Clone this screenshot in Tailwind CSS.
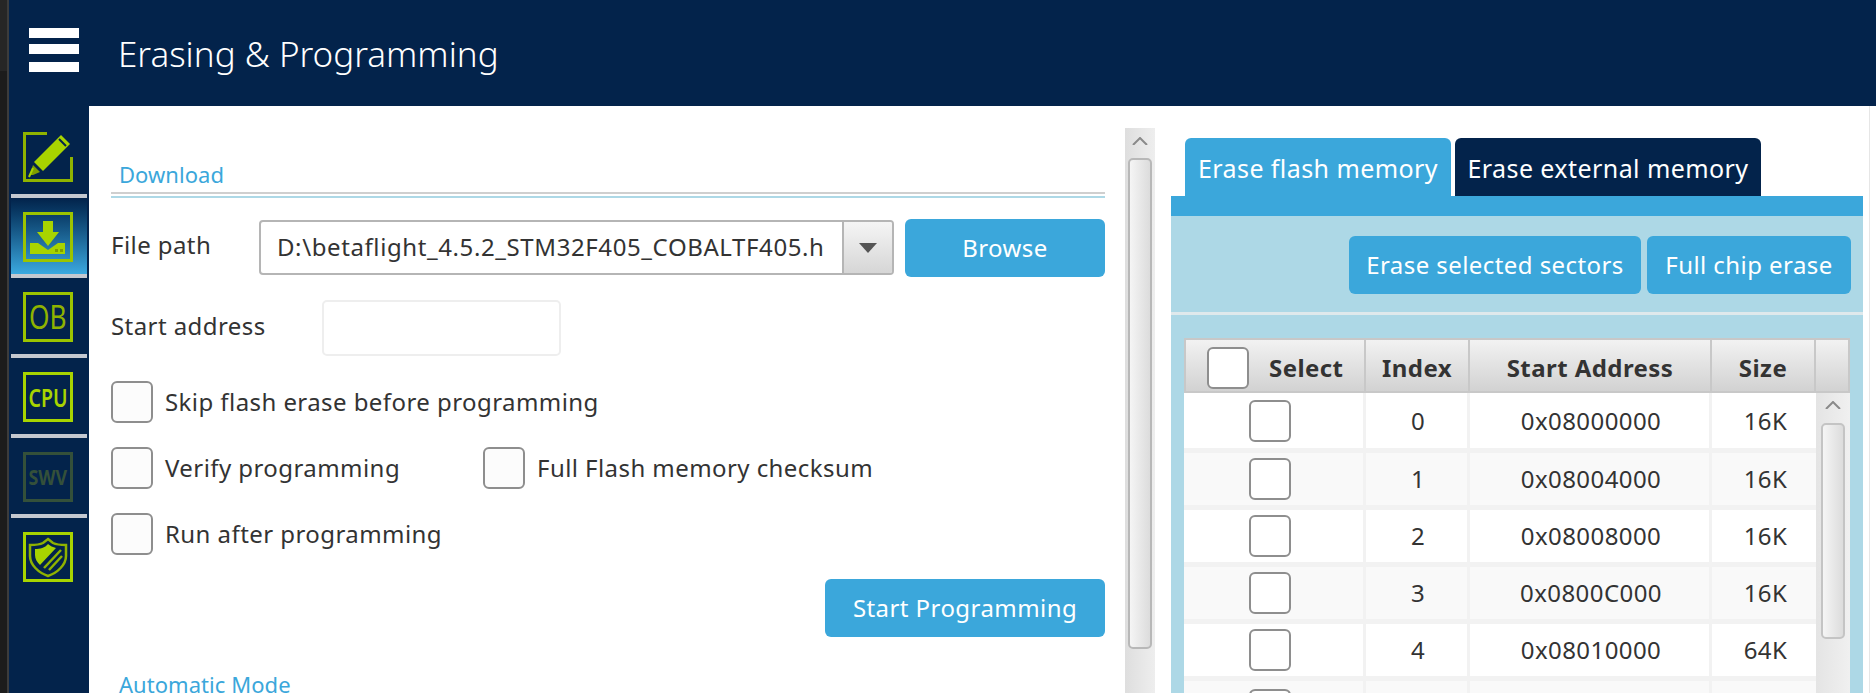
<!DOCTYPE html>
<html lang="en">
<head>
  <meta charset="UTF-8">
  <title>Erasing &amp; Programming</title>
  <script src="https://cdn.jsdelivr.net/npm/@tailwindcss/browser@4"></script>
</head>
<body class="h-[693px] w-[1876px] overflow-hidden flex bg-[#1c1c1c] font-['Noto_Sans',sans-serif] text-[#333]">
  <!-- window edge -->
  <div class="w-[7px] shrink-0 bg-[#1c1c1c]"><div class="h-[71px] bg-[#262626]"></div></div>
  <div class="w-[2px] shrink-0 bg-[#3c3c3c]"></div>

  <div class="flex-1 flex flex-col min-w-0">
    <!-- top bar -->
    <header class="h-[106px] shrink-0 bg-[#03234b] flex items-start">
      <div class="w-[50px] ml-[20px] mt-[28px] flex flex-col">
        <div class="h-[10px] bg-white"></div>
        <div class="h-[10px] bg-white mt-[6px]"></div>
        <div class="h-[10px] bg-white mt-[8px]"></div>
      </div>
      <h1 class="ml-[39px] mt-[31px] text-[35px] leading-[46px] font-light text-white">Erasing &amp; Programming</h1>
    </header>

    <div class="flex-1 flex min-h-0">
      <!-- side menu -->
      <nav class="w-[80px] shrink-0 bg-[#03234b] pt-[12px] flex flex-col items-center">
        <div class="w-[76px] h-[76px] pl-[12px] pr-[14px] pt-[14px]">
          <svg width="50" height="50" viewBox="0 0 50 50" fill="none">
            <path d="M24 1.500H1.500V48.500H48.500V25" stroke="#8fb300" stroke-width="3"/>
            <path d="M38 3L47 12L20 39L11 30Z" fill="#a8d400"/>
            <path d="M36 7L43 14" stroke="#03234b" stroke-width="2"/>
            <path d="M10 33L17 40L10 43L7 43Z" fill="#7f9f00"/>
            <path d="M6 45L10 36" stroke="#a8d400" stroke-width="2"/>
          </svg>
        </div>
        <div class="w-[76px] h-[4px] bg-[#c4c8d0]"></div>

        <div class="w-[76px] h-[76px] pl-[12px] pr-[14px] pt-[14px] bg-gradient-to-b from-[#03234b] to-[#3ba9e0]">
          <svg width="50" height="50" viewBox="0 0 50 50" fill="none">
            <rect x="1.500" y="1.500" width="47" height="47" stroke="#9cc400" stroke-width="3"/>
            <path d="M20 9H30V20H36L25 34L14 20H20Z" fill="#a8d400"/>
            <path d="M7 31H15L25 38L35 31H42V42H7Z" fill="#a8d400"/>
            <rect x="32" y="37" width="3" height="3" fill="#7f9f00"/>
            <rect x="37" y="37" width="3" height="3" fill="#7f9f00"/>
          </svg>
        </div>
        <div class="w-[76px] h-[4px] bg-[#c4c8d0]"></div>

        <div class="w-[76px] h-[76px] pl-[12px] pr-[14px] pt-[14px]">
          <div class="w-[50px] h-[50px] border-[3px] border-[#9cc400] flex items-center justify-center text-[32px] leading-none text-[#8fb300]"><span class="scale-x-[0.82]">OB</span></div>
        </div>
        <div class="w-[76px] h-[4px] bg-[#c4c8d0]"></div>

        <div class="w-[76px] h-[76px] pl-[12px] pr-[14px] pt-[14px]">
          <div class="w-[50px] h-[50px] border-[3px] border-[#a8d400] flex items-center justify-center text-[25px] leading-none font-semibold text-[#a8d400]"><span class="scale-x-[0.78]">CPU</span></div>
        </div>
        <div class="w-[76px] h-[4px] bg-[#c4c8d0]"></div>

        <div class="w-[76px] h-[76px] pl-[12px] pr-[14px] pt-[14px]">
          <div class="w-[50px] h-[50px] border-[3px] border-[#34503a] flex items-center justify-center text-[21px] leading-none font-bold text-[#34503a]"><span class="scale-x-[0.85]">SWV</span></div>
        </div>
        <div class="w-[76px] h-[4px] bg-[#c4c8d0]"></div>

        <div class="w-[76px] h-[76px] pl-[12px] pr-[14px] pt-[14px]">
          <svg width="50" height="50" viewBox="0 0 50 50" fill="none">
            <rect x="1.500" y="1.500" width="47" height="47" stroke="#a8d400" stroke-width="3"/>
            <path d="M25 7L30 11C34 13 38 13 43 13V24C43 33 34 41 25 44C16 41 7 33 7 24V13C12 13 16 13 20 11Z" stroke="#8fb300" stroke-width="2.500"/>
            <path d="M25 12C27 14 30 15 33 16L17 33C14 30 12 27 12 23V17C17 17 22 16 25 12Z" fill="#a8d400"/>
            <path d="M38 18L21 36M39 24L26 38" stroke="#8fb300" stroke-width="2.500"/>
          </svg>
        </div>
      </nav>

      <!-- content -->
      <main class="flex-1 flex min-w-0 bg-white text-[24px] tracking-[0.43px]">
        <!-- download pane -->
        <section class="w-[1036px] shrink-0 pl-[22px] pr-[20px] pt-[53px] overflow-hidden">
          <h2 class="h-[33px] pl-[8px] text-[22px] leading-[30px] text-[#3ba7db] tracking-[0.05px]">Download</h2>
          <div class="h-[6px] border-t-2 border-b-2 border-t-[#cfcfcf] border-b-[#add8e6]"></div>

          <div class="mt-[20px] flex items-start">
            <label class="w-[148px] leading-[52px] mt-[1px]">File path</label>
            <div class="w-[635px] h-[55px] mt-[2px] flex border-2 border-[#b5b5b5] rounded-[4px] bg-white overflow-hidden">
              <div class="flex-1 min-w-0 ml-[16px] mr-[17px] overflow-hidden whitespace-nowrap leading-[50px] tracking-[0.6px]">D:\betaflight_4.5.2_STM32F405_COBALTF405.hex</div>
              <div class="w-[50px] shrink-0 border-l-2 border-[#b5b5b5] bg-gradient-to-b from-[#f5f5f5] to-[#d6d6d6] flex items-center justify-center">
                <div class="w-0 h-0 border-l-[9px] border-r-[9px] border-t-[10px] border-l-transparent border-r-transparent border-t-[#555]"></div>
              </div>
            </div>
            <button class="w-[200px] h-[58px] mt-[1px] ml-[11px] rounded-[6px] bg-[#3ba7db] text-white">Browse</button>
          </div>

          <div class="mt-[23px] flex items-start">
            <label class="w-[211px] leading-[52px]">Start address</label>
            <div class="w-[239px] h-[56px] border-2 border-[#eeeeee] rounded-[5px] bg-white"></div>
          </div>

          <div class="mt-[25px] flex items-center h-[42px]">
            <div class="w-[42px] h-[42px] border-2 border-[#8e8e8e] rounded-[6px] bg-[#fcfcfc]"></div>
            <span class="ml-[12px]">Skip flash erase before programming</span>
          </div>
          <div class="mt-[24px] flex items-center h-[42px]">
            <div class="w-[42px] h-[42px] border-2 border-[#8e8e8e] rounded-[6px] bg-[#fcfcfc]"></div>
            <span class="ml-[12px] w-[318px]">Verify programming</span>
            <div class="w-[42px] h-[42px] border-2 border-[#8e8e8e] rounded-[6px] bg-[#fcfcfc]"></div>
            <span class="ml-[12px]">Full Flash memory checksum</span>
          </div>
          <div class="mt-[24px] flex items-center h-[42px]">
            <div class="w-[42px] h-[42px] border-2 border-[#8e8e8e] rounded-[6px] bg-[#fcfcfc]"></div>
            <span class="ml-[12px]">Run after programming</span>
          </div>

          <div class="mt-[24px] flex justify-end">
            <button class="w-[280px] h-[58px] rounded-[6px] bg-[#3ba7db] text-white">Start Programming</button>
          </div>

          <h2 class="mt-[32px] pl-[8px] text-[22px] leading-[30px] text-[#3ba7db] tracking-[0.05px]">Automatic Mode</h2>
        </section>

        <!-- left pane scrollbar -->
        <div class="w-[30px] shrink-0 mt-[22px] bg-gradient-to-r from-[#dedede] to-[#eeeeee] flex flex-col items-center">
          <svg class="mt-[9px] h-[8px] shrink-0" width="16" height="8" viewBox="0 0 16 8" fill="none"><path d="M1 8L8 1L15 8" stroke="#8a8a8a" stroke-width="2"/></svg>
          <div class="mt-[13px] w-[24px] h-[491px] border-2 border-[#b8b8b8] rounded-[5px] bg-gradient-to-r from-[#f5f5f5] to-[#dcdcdc]"></div>
        </div>

        <!-- erase pane -->
        <section class="flex-1 min-w-0 pt-[32px] pl-[16px] flex flex-col">
          <div class="h-[58px] shrink-0 flex gap-[4px] pl-[14px] text-[25px]">
            <div class="w-[266px] pt-[3px] rounded-t-[6px] bg-[#3ba7db] text-white flex items-center justify-center">Erase flash memory</div>
            <div class="w-[306px] pt-[3px] rounded-t-[6px] bg-[#03234b] text-white flex items-center justify-center">Erase external memory</div>
          </div>
          <div class="h-[20px] shrink-0 bg-[#3ba7db]"></div>
          <div class="flex-1 bg-[#add8e6] flex flex-col min-h-0">
            <div class="h-[99px] shrink-0 pt-[20px] pr-[12px] flex justify-end gap-[6px] border-b-[3px] border-[#dfe9ec]">
              <button class="w-[292px] h-[58px] rounded-[6px] bg-[#3ba7db] text-white">Erase selected sectors</button>
              <button class="w-[204px] h-[58px] rounded-[6px] bg-[#3ba7db] text-white">Full chip erase</button>
            </div>

            <div class="mt-[23px] ml-[13px] mr-[13px] flex-1 min-h-0 bg-[#f2f2f2] flex flex-col overflow-hidden">
              <!-- table head -->
              <div class="h-[55px] shrink-0 flex border-2 border-[#c8c8c8] font-bold bg-gradient-to-b from-[#f2f2f2] to-[#d2d2d2]">
                <div class="w-[180px] pt-1 flex items-center border-r-2 border-[#c8c8c8]">
                  <div class="ml-[21px] w-[42px] h-[42px] border-2 border-[#8e8e8e] rounded-[6px] bg-white"></div>
                  <span class="ml-[20px]">Select</span>
                </div>
                <div class="w-[104px] pt-1 flex items-center justify-center border-r-2 border-[#c8c8c8]">Index</div>
                <div class="w-[242px] pt-1 flex items-center justify-center border-r-2 border-[#c8c8c8]">Start Address</div>
                <div class="w-[104px] pt-1 flex items-center justify-center border-r-2 border-[#c8c8c8]">Size</div>
                <div class="flex-1"></div>
              </div>

              <div class="flex-1 flex min-h-0">
                <!-- table rows -->
                <div class="w-[632px] shrink-0">
                  <div class="h-[60px] flex bg-white border-b-[5px] border-[#f2f2f2]">
                    <div class="w-[182px] pl-[65px] flex items-center border-r-[3px] border-[#f2f2f2]"><div class="w-[42px] h-[42px] border-2 border-[#8e8e8e] rounded-[6px] bg-white"></div></div>
                    <div class="w-[104px] pl-[3px] flex items-center justify-center border-r-[3px] border-[#f2f2f2]">0</div>
                    <div class="w-[242px] pl-[3px] flex items-center justify-center border-r-[3px] border-[#f2f2f2]">0x08000000</div>
                    <div class="flex-1 pl-[3px] flex items-center justify-center">16K</div>
                  </div>
                  <div class="h-[57px] flex bg-[#f9f9f9] border-b-[5px] border-[#f2f2f2]">
                    <div class="w-[182px] pl-[65px] flex items-center border-r-[3px] border-[#f2f2f2]"><div class="w-[42px] h-[42px] border-2 border-[#8e8e8e] rounded-[6px] bg-white"></div></div>
                    <div class="w-[104px] pl-[3px] flex items-center justify-center border-r-[3px] border-[#f2f2f2]">1</div>
                    <div class="w-[242px] pl-[3px] flex items-center justify-center border-r-[3px] border-[#f2f2f2]">0x08004000</div>
                    <div class="flex-1 pl-[3px] flex items-center justify-center">16K</div>
                  </div>
                  <div class="h-[57px] flex bg-white border-b-[5px] border-[#f2f2f2]">
                    <div class="w-[182px] pl-[65px] flex items-center border-r-[3px] border-[#f2f2f2]"><div class="w-[42px] h-[42px] border-2 border-[#8e8e8e] rounded-[6px] bg-white"></div></div>
                    <div class="w-[104px] pl-[3px] flex items-center justify-center border-r-[3px] border-[#f2f2f2]">2</div>
                    <div class="w-[242px] pl-[3px] flex items-center justify-center border-r-[3px] border-[#f2f2f2]">0x08008000</div>
                    <div class="flex-1 pl-[3px] flex items-center justify-center">16K</div>
                  </div>
                  <div class="h-[57px] flex bg-[#f9f9f9] border-b-[5px] border-[#f2f2f2]">
                    <div class="w-[182px] pl-[65px] flex items-center border-r-[3px] border-[#f2f2f2]"><div class="w-[42px] h-[42px] border-2 border-[#8e8e8e] rounded-[6px] bg-white"></div></div>
                    <div class="w-[104px] pl-[3px] flex items-center justify-center border-r-[3px] border-[#f2f2f2]">3</div>
                    <div class="w-[242px] pl-[3px] flex items-center justify-center border-r-[3px] border-[#f2f2f2]">0x0800C000</div>
                    <div class="flex-1 pl-[3px] flex items-center justify-center">16K</div>
                  </div>
                  <div class="h-[57px] flex bg-white border-b-[5px] border-[#f2f2f2]">
                    <div class="w-[182px] pl-[65px] flex items-center border-r-[3px] border-[#f2f2f2]"><div class="w-[42px] h-[42px] border-2 border-[#8e8e8e] rounded-[6px] bg-white"></div></div>
                    <div class="w-[104px] pl-[3px] flex items-center justify-center border-r-[3px] border-[#f2f2f2]">4</div>
                    <div class="w-[242px] pl-[3px] flex items-center justify-center border-r-[3px] border-[#f2f2f2]">0x08010000</div>
                    <div class="flex-1 pl-[3px] flex items-center justify-center">64K</div>
                  </div>
                  <div class="h-[57px] flex bg-[#f9f9f9]">
                    <div class="w-[182px] pl-[65px] flex items-center border-r-[3px] border-[#f2f2f2]"><div class="w-[42px] h-[42px] border-2 border-[#8e8e8e] rounded-[6px] bg-white"></div></div>
                    <div class="w-[104px] border-r-[3px] border-[#f2f2f2]"></div>
                    <div class="w-[242px] border-r-[3px] border-[#f2f2f2]"></div>
                    <div class="flex-1"></div>
                  </div>
                </div>
                <!-- table scrollbar -->
                <div class="flex-1 bg-gradient-to-r from-[#e4e4e4] to-[#f0f0f0] flex flex-col items-center">
                  <svg class="mt-[8px] h-[8px] shrink-0" width="16" height="8" viewBox="0 0 16 8" fill="none"><path d="M1 8L8 1L15 8" stroke="#8a8a8a" stroke-width="2"/></svg>
                  <div class="mt-[14px] w-[24px] h-[216px] border-2 border-[#c4c4c4] rounded-[5px] bg-gradient-to-r from-[#f5f5f5] to-[#dcdcdc]"></div>
                </div>
              </div>
            </div>
          </div>
        </section>
        <div class="w-[13px] shrink-0 bg-white border-l-0 flex justify-center"><div class="w-px bg-[#e6e6e6]"></div></div>
      </main>
    </div>
  </div>
</body>
</html>
